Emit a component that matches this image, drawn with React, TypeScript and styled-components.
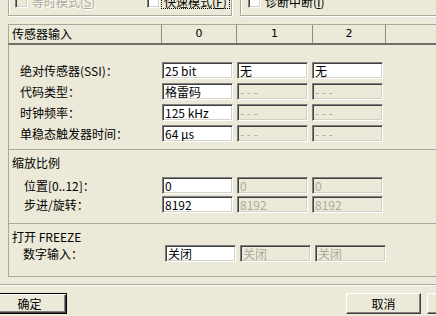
import styled, { createGlobalStyle } from "styled-components";

const GlobalStyle = createGlobalStyle`
  html, body {
    margin: 0;
    padding: 0;
    background: #ece9d8;
  }
  body {
    font-family: "Noto Sans CJK SC", "Noto Sans", sans-serif;
    font-size: 12px;
    color: #000;
  }
`;

const Dialog = styled.div`
  width: 436px;
  height: 316px;
  overflow: hidden;
  background: #ece9d8;
`;

const ModeBar = styled.div`
  display: flex;
  gap: 8px;
  height: 30px;
  margin: -14px 0 0 8px;
  width: 460px;
`;

const GroupBox = styled.div<{ $width: number; $pad: number }>`
  box-sizing: border-box;
  flex: 0 0 ${(p) => p.$width}px;
  height: 30px;
  border: 1px solid #aca899;
  box-shadow: inset 1px 1px 0 #fff, 1px 1px 0 #fff;
  display: flex;
  align-items: flex-start;
  padding: 8px 0 0 ${(p) => p.$pad}px;
`;

const Option = styled.div<{ $width?: number; $gap: number }>`
  display: flex;
  align-items: center;
  gap: ${(p) => p.$gap}px;
  height: 13px;
  ${(p) => (p.$width ? `width: ${p.$width}px;` : "")}
  flex-shrink: 0;
`;

const Check = styled.span<{ $disabled?: boolean }>`
  box-sizing: border-box;
  width: 13px;
  height: 13px;
  flex-shrink: 0;
  border: 1px solid;
  border-color: #808080 #fff #fff #808080;
  box-shadow: inset 1px 1px 0 #404040, inset -1px -1px 0 #d4d0c8;
  background: ${(p) => (p.$disabled ? "#ece9d8" : "#fff")};
`;

const OptionText = styled.span<{ $disabled?: boolean; $focus?: boolean }>`
  line-height: 13px;
  white-space: nowrap;
  color: ${(p) => (p.$disabled ? "#aca899" : "#000")};
  text-shadow: ${(p) => (p.$disabled ? "1px 1px 0 #fff" : "none")};
  padding: 0 ${(p) => (p.$focus ? 2 : 0)}px;
  outline: ${(p) => (p.$focus ? "1px dotted #000" : "none")};
  u {
    text-decoration: underline;
  }
`;

const Table = styled.div`
  margin: 8px 0 0 8px;
  width: 440px;
`;

const HeaderRow = styled.div`
  box-sizing: border-box;
  display: grid;
  grid-template-columns: 153px 75px 76px 73px 1fr;
  height: 21px;
  border-top: 1px solid #aca899;
  border-left: 1px solid #aca899;
  border-bottom: 2px solid #716f64;
`;

const HeaderCell = styled.div<{ $first?: boolean }>`
  box-sizing: border-box;
  border-right: 1px solid #8f8c7e;
  display: flex;
  align-items: center;
  justify-content: ${(p) => (p.$first ? "flex-start" : "center")};
  padding-left: ${(p) => (p.$first ? 3 : 0)}px;
  line-height: 18px;
  font-family: ${(p) =>
    p.$first ? `"Noto Sans CJK SC", sans-serif` : `"DejaVu Sans", "Noto Sans", sans-serif`};
  font-size: ${(p) => (p.$first ? 12 : 11)}px;
`;

const Body = styled.div`
  border-left: 1px solid #aca899;
  border-bottom: 1px solid #aca899;
`;

const Section = styled.div<{ $top: number; $bottom: number; $gap: number }>`
  display: flex;
  flex-direction: column;
  gap: ${(p) => p.$gap}px;
  padding: ${(p) => p.$top}px 0 ${(p) => p.$bottom}px;
  & + & {
    border-top: 1px solid #aca899;
  }
`;

const SectionTitle = styled.div<{ $after: number }>`
  padding-left: 3px;
  line-height: 12px;
  height: 12px;
  margin-bottom: ${(p) => p.$after}px;
  white-space: nowrap;
`;

const Row = styled.div<{ $indent: number; $label: number }>`
  display: grid;
  grid-template-columns: ${(p) => p.$label}px repeat(3, 71px);
  column-gap: 4px;
  padding-left: ${(p) => p.$indent}px;
  height: 17px;
  align-items: center;
`;

const Label = styled.div`
  white-space: nowrap;
  line-height: 17px;
`;

const Field = styled.div<{ $disabled?: boolean }>`
  box-sizing: border-box;
  height: 17px;
  border: 1px solid;
  border-color: #808080 #fff #fff #808080;
  box-shadow: inset 1px 1px 0 #404040, inset -1px -1px 0 #d4d0c8;
  background: ${(p) => (p.$disabled ? "#ece9d8" : "#fff")};
  color: ${(p) => (p.$disabled ? "#aca899" : "#000")};
  padding: 0 2px;
  line-height: 15px;
  white-space: nowrap;
  overflow: hidden;
`;

const Separator = styled.div`
  margin-top: 7px;
  height: 0;
  border-top: 1px solid #aca899;
  border-bottom: 1px solid #fff;
`;

const ButtonRow = styled.div`
  display: flex;
  gap: 6px;
  width: 510px;
  margin: 7px 0 0 -8px;
`;

const Button = styled.button<{ $default?: boolean; $push?: boolean }>`
  box-sizing: border-box;
  width: 75px;
  height: 21px;
  flex-shrink: 0;
  margin-left: ${(p) => (p.$push ? "auto" : "0")};
  padding: 0;
  background: #ece9d8;
  font-family: "Noto Sans CJK SC", sans-serif;
  font-size: 12px;
  line-height: 17px;
  color: #000;
  border: 1px solid;
  border-color: ${(p) => (p.$default ? "#000" : "#fff #404040 #404040 #fff")};
  box-shadow: ${(p) =>
    p.$default
      ? "inset 1px 1px 0 #fff, inset -1px -1px 0 #404040, inset -2px -2px 0 #808080"
      : "inset -1px -1px 0 #808080"};
`;

type Cell = { text: string; disabled?: boolean };

const sensorRows: { label: string; cells: Cell[] }[] = [
  {
    label: "绝对传感器(SSI)：",
    cells: [{ text: "25 bit" }, { text: "无" }, { text: "无" }],
  },
  {
    label: "代码类型：",
    cells: [
      { text: "格雷码" },
      { text: "- - -", disabled: true },
      { text: "- - -", disabled: true },
    ],
  },
  {
    label: "时钟频率：",
    cells: [
      { text: "125 kHz" },
      { text: "- - -", disabled: true },
      { text: "- - -", disabled: true },
    ],
  },
  {
    label: "单稳态触发器时间：",
    cells: [
      { text: "64 μs" },
      { text: "- - -", disabled: true },
      { text: "- - -", disabled: true },
    ],
  },
];

const scaleRows: { label: string; cells: Cell[] }[] = [
  {
    label: "位置[0..12]：",
    cells: [{ text: "0" }, { text: "0", disabled: true }, { text: "0", disabled: true }],
  },
  {
    label: "步进/旋转：",
    cells: [
      { text: "8192" },
      { text: "8192", disabled: true },
      { text: "8192", disabled: true },
    ],
  },
];

const freezeCells: Cell[] = [
  { text: "关闭" },
  { text: "关闭", disabled: true },
  { text: "关闭", disabled: true },
];

function Fields({ cells }: { cells: Cell[] }) {
  return (
    <>
      {cells.map((c, i) => (
        <Field key={i} $disabled={c.disabled}>
          {c.text}
        </Field>
      ))}
    </>
  );
}

export default function App() {
  return (
    <Dialog>
      <GlobalStyle />
      <ModeBar>
        <GroupBox $width={224} $pad={6}>
          <Option $width={132} $gap={4}>
            <Check $disabled />
            <OptionText $disabled>
              等时模式(<u>S</u>)
            </OptionText>
          </Option>
          <Option $gap={2}>
            <Check />
            <OptionText $focus>
              快速模式(<u>F</u>)
            </OptionText>
          </Option>
        </GroupBox>
        <GroupBox $width={220} $pad={7}>
          <Option $gap={4}>
            <Check />
            <OptionText>
              诊断中断(<u>I</u>)
            </OptionText>
          </Option>
        </GroupBox>
      </ModeBar>

      <Table>
        <HeaderRow>
          <HeaderCell $first>传感器输入</HeaderCell>
          <HeaderCell>0</HeaderCell>
          <HeaderCell>1</HeaderCell>
          <HeaderCell>2</HeaderCell>
          <HeaderCell />
        </HeaderRow>
        <Body>
          <Section $top={17} $bottom={7} $gap={4}>
            {sensorRows.map((r) => (
              <Row key={r.label} $indent={11} $label={138}>
                <Label>{r.label}</Label>
                <Fields cells={r.cells} />
              </Row>
            ))}
          </Section>
          <Section $top={7} $bottom={10} $gap={2}>
            <SectionTitle $after={6}>缩放比例</SectionTitle>
            {scaleRows.map((r) => (
              <Row key={r.label} $indent={15} $label={134}>
                <Label>{r.label}</Label>
                <Fields cells={r.cells} />
              </Row>
            ))}
          </Section>
          <Section $top={7} $bottom={14} $gap={0}>
            <SectionTitle $after={2}>打开 FREEZE</SectionTitle>
            <Row $indent={14} $label={138}>
              <Label>数字输入：</Label>
              <Fields cells={freezeCells} />
            </Row>
          </Section>
        </Body>
      </Table>

      <Separator />
      <ButtonRow>
        <Button $default>确定</Button>
        <Button $push>取消</Button>
        <Button>帮助</Button>
      </ButtonRow>
    </Dialog>
  );
}
